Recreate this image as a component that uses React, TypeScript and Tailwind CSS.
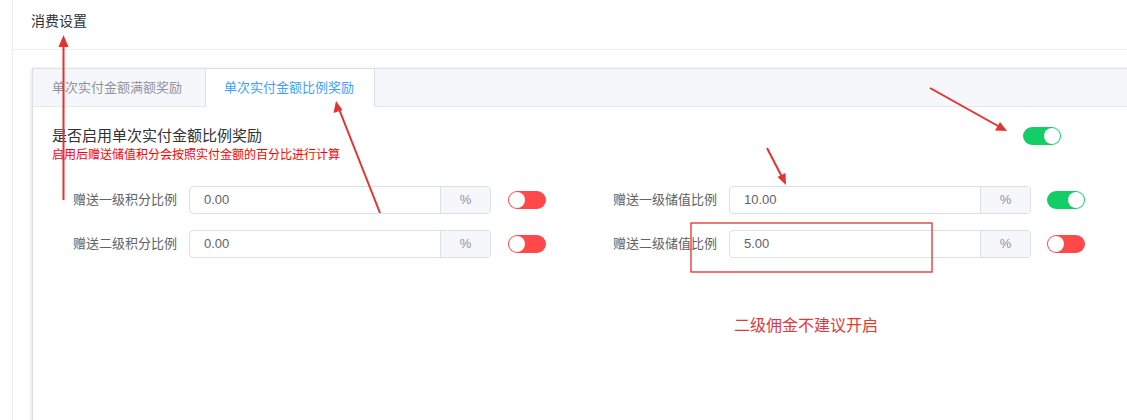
import React from "react";

const font = "font-['Helvetica_Neue','Liberation_Sans','Noto_Sans_CJK_SC',sans-serif]";

const Toggle: React.FC<{ on: boolean }> = ({ on }) => (
  <div
    className={`relative w-[38px] h-[18px] rounded-full shrink-0 ${
      on ? "bg-[#13ce66]" : "bg-[#ff4949]"
    }`}
  >
    <span
      className={`absolute top-[1px] w-[16px] h-[16px] rounded-full bg-white ${
        on ? "right-[1px]" : "left-[1px]"
      }`}
    ></span>
  </div>
);

const Field: React.FC<{ label: string; value: string; on: boolean; gap: string }> = ({
  label,
  value,
  on,
  gap,
}) => (
  <div className="flex items-center w-[540px]">
    <div className="w-[137px] pr-[12px] text-right text-[13px] text-[#606266] leading-[28px]">
      {label}
    </div>
    <div className="flex w-[302px] h-[28px] border border-[#dcdfe6] rounded-[4px] overflow-hidden">
      <div className="flex-1 pl-[14px] text-[13px] text-[#606266] leading-[26px]">{value}</div>
      <div className="w-[50px] bg-[#f5f7fa] border-l border-[#dcdfe6] text-center text-[13px] text-[#909399] leading-[26px]">
        %
      </div>
    </div>
    <div className={gap}>
      <Toggle on={on} />
    </div>
  </div>
);

const App: React.FC = () => {
  return (
    <div className={`relative w-[1127px] h-[420px] overflow-hidden bg-white ${font}`}>
      <div className="ml-[12px] h-full border-l border-[#ebeef5]">
        <div className="h-[38px] border-b border-[#ebeef5] pl-[18px] pt-[11px] text-[14px] leading-[20px] text-[#303133] box-content">
          消费设置
        </div>
        <div className="pl-[19px] pt-[18px]">
          <div className="w-[1200px] h-[400px] border border-[#dcdfe6] bg-white shadow-[0_2px_4px_0_rgba(0,0,0,0.12),0_0_6px_0_rgba(0,0,0,0.04)]">
            {/* tabs */}
            <div className="flex h-[38px] bg-[#f5f7fa] border-b border-[#e4e7ed]">
              <div className="pl-[19px] pr-[23px] text-[13px] leading-[37px] text-[#909399]">单次实付金额满额奖励</div>
              <div className="-mb-px pl-[18px] pr-[20px] bg-white border-x border-[#dcdfe6] text-[13px] leading-[37px] text-[#409eff]">
                单次实付金额比例奖励
              </div>
            </div>

            <div className="pl-[19px] pt-[18px]">
              <div className="flex items-center justify-between w-[1009px]">
                <div className="text-[15px] leading-[22px] text-[#303133]">是否启用单次实付金额比例奖励</div>
                <Toggle on={true} />
              </div>
              <div className="text-[12px] leading-[16px] text-[#f00]">
                启用后赠送储值积分会按照实付金额的百分比进行计算
              </div>

              <div className="mt-[23px] flex flex-col gap-[16px]">
                <div className="flex">
                  <Field label="赠送一级积分比例" value="0.00" on={false} gap="ml-[17px]" />
                  <Field label="赠送一级储值比例" value="10.00" on={true} gap="ml-[16px]" />
                </div>
                <div className="flex">
                  <Field label="赠送二级积分比例" value="0.00" on={false} gap="ml-[17px]" />
                  <Field label="赠送二级储值比例" value="5.00" on={false} gap="ml-[16px]" />
                </div>
              </div>
            </div>
          </div>
        </div>
      </div>

      {/* annotations */}
      <svg className="absolute inset-0 pointer-events-none" width="1127" height="420">
        <g stroke="#e8302f" strokeWidth="2" fill="none">
          <line x1="63.5" y1="200" x2="63.5" y2="44" />
          <line x1="380" y1="213" x2="339" y2="109" />
          <line x1="930" y1="88" x2="998" y2="126" />
          <line x1="767" y1="148" x2="782" y2="177" />
        </g>
        <rect x="691" y="223" width="241" height="49" stroke="#e03030" strokeWidth="1.3" fill="none" />
        <g fill="#e8302f">
          <polygon points="63.5,35 58.5,47 68.5,47" />
          <polygon points="336,101 333.5,113 342.5,110" />
          <polygon points="1007,131 995,130.5 1000,122" />
          <polygon points="786,185 777.5,177 785.5,173" />
        </g>
      </svg>
      <div className="absolute left-[734px] top-[313px] text-[16px] leading-[22px] text-[#e03a3a] font-['Noto_Sans_CJK_SC',sans-serif]">
        二级佣金不建议开启
      </div>
    </div>
  );
};

export default App;
